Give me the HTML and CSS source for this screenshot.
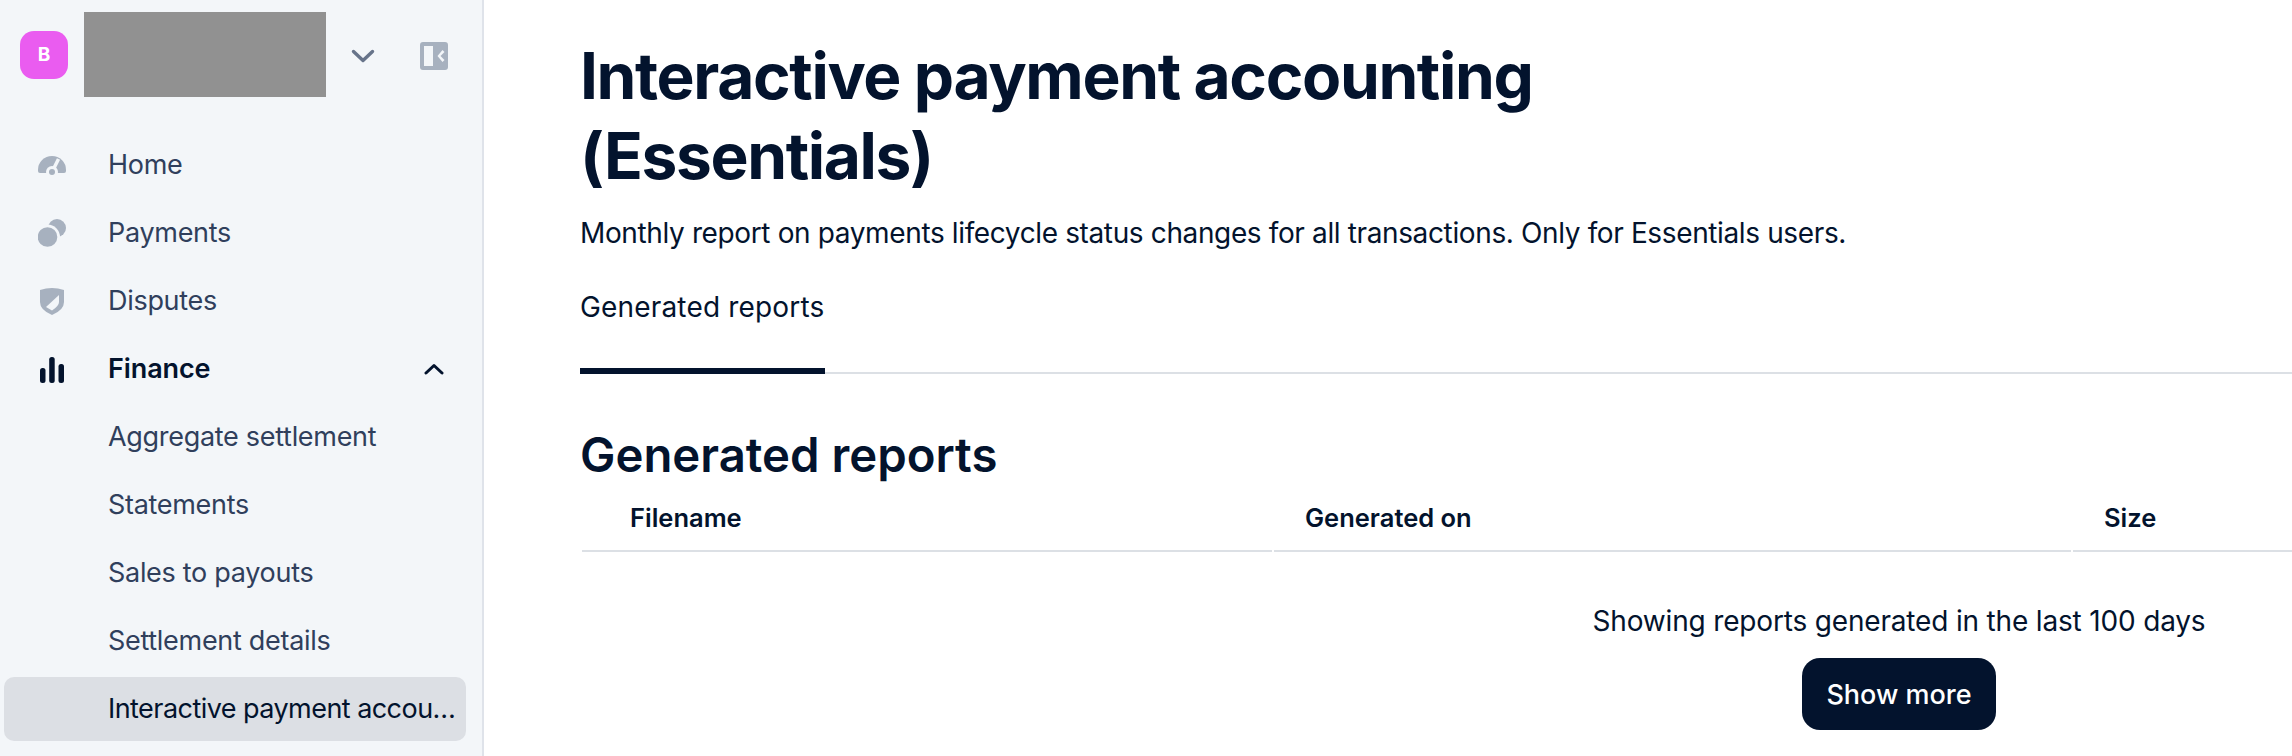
FILE: index.html
```html
<!DOCTYPE html>
<html lang="en">
<head>
  <meta charset="UTF-8">
  <title>Interactive payment accounting (Essentials)</title>
  <link rel="stylesheet" href="styles.css">
</head>
<body>

  <aside class="sidebar">
    <div class="org">
      <div class="org-badge">B</div>
      <div class="org-name"></div>
      <svg class="org-chevron" viewBox="0 0 24 14" width="24" height="14"><path d="M2.5 2.5 12 11.500 21.500 2.500" fill="none" stroke="#67748a" stroke-width="3.400" stroke-linecap="round" stroke-linejoin="round"/></svg>
      <svg class="org-collapse" viewBox="0 0 28 28" width="28" height="28"><path fill-rule="evenodd" d="M3 0h22a3 3 0 0 1 3 3v22a3 3 0 0 1-3 3H3a3 3 0 0 1-3-3V3a3 3 0 0 1 3-3ZM4 4v20h9V4H4ZM22.500 8 17.500 14 22.500 20 24.500 18 20.500 14 24.500 10Z" fill="#a7b1bf"/></svg>
    </div>

    <nav class="nav">
      <a class="nav-item">
        <svg class="nav-icon" viewBox="0 0 28 28" width="28" height="28">
          <path d="M0 19A14 14 0 0 1 28 19V20Q28 22 26 22H2Q0 22 0 20Z" fill="#a7b1bf"/>
          <circle cx="14" cy="21" r="6" fill="#f3f6f9"/>
          <path d="M15 19 20.500 8" stroke="#f3f6f9" stroke-width="3.500"/>
          <circle cx="14" cy="21" r="3" fill="#a7b1bf"/>
        </svg>
        Home
      </a>
      <a class="nav-item">
        <svg class="nav-icon" viewBox="0 0 28 28" width="28" height="28">
          <circle cx="19" cy="9" r="9" fill="#a7b1bf"/>
          <circle cx="9.500" cy="18" r="12.500" fill="#f3f6f9"/>
          <circle cx="9.500" cy="18" r="9.800" fill="#a7b1bf"/>
        </svg>
        Payments
      </a>
      <a class="nav-item">
        <svg class="nav-icon" viewBox="0 0 28 28" width="28" height="28">
          <path d="M2 3Q14-1 26 3V15Q26 23 14 28 2 23 2 15Z" fill="#a7b1bf"/>
          <path d="M21 8V15Q21 19 14 23.500L8 20Z" fill="#f3f6f9"/>
        </svg>
        Disputes
      </a>
      <a class="nav-item nav-open">
        <svg class="nav-icon" viewBox="0 0 28 28" width="28" height="28">
          <rect x="2" y="13" width="5.500" height="15" rx="2.500" fill="#03132d"/>
          <rect x="11.200" y="2" width="5.500" height="26" rx="2.500" fill="#03132d"/>
          <rect x="20.500" y="9" width="5.500" height="19" rx="2.500" fill="#03132d"/>
        </svg>
        Finance
        <svg class="nav-caret" viewBox="0 0 20 12" width="20" height="12"><path d="M2 10 10 2.500 18 10" fill="none" stroke="#03132d" stroke-width="3" stroke-linecap="round" stroke-linejoin="round"/></svg>
      </a>
      <a class="nav-item nav-sub">Aggregate settlement</a>
      <a class="nav-item nav-sub">Statements</a>
      <a class="nav-item nav-sub">Sales to payouts</a>
      <a class="nav-item nav-sub">Settlement details</a>
      <a class="nav-item nav-sub nav-active"><span class="nav-label">Interactive payment accounting (Essentials)</span></a>
    </nav>
  </aside>

  <main class="main">
    <h1 class="title">Interactive payment accounting (Essentials)</h1>
    <p class="desc">Monthly report on payments lifecycle status changes for all transactions. Only for Essentials users.</p>

    <div class="tabs">
      <div class="tab">Generated reports</div>
    </div>

    <h2 class="section-title">Generated reports</h2>

    <div class="table">
      <div class="table-head">Filename</div>
      <div class="table-head">Generated on</div>
      <div class="table-head">Size</div>
    </div>

    <div class="table-footer">
      <p class="footer-note">Showing reports generated in the last 100 days</p>
      <button class="more-btn">Show more</button>
    </div>
  </main>

</body>
</html>
```

FILE: styles.css
```css
:root {
  --ink: #03132d;
  --muted: #303f5c;
  --line: #dce0e5;
  --side-bg: #f3f6f9;
}

html, body {
  height: 100%;
}

body {
  margin: 0;
  display: flex;
  overflow: hidden;
  background: #fff;
  color: var(--ink);
  font-family: Inter, "Liberation Sans", sans-serif;
}

.sidebar {
  flex: 0 0 484px;
  min-width: 0;
  box-sizing: border-box;
  background: var(--side-bg);
  border-right: 2px solid #dfe3ea;
  padding: 12px 16px 0 4px;
}

.org {
  display: flex;
  align-items: center;
  height: 85px;
  margin-bottom: 36px;
  padding-left: 16px;
}

.org-badge {
  flex: none;
  width: 48px;
  height: 48px;
  border-radius: 14px;
  background: #ea5cf0;
  color: #fff;
  font-size: 19px;
  font-weight: 700;
  line-height: 48px;
  text-align: center;
}

.org-name {
  flex: none;
  width: 242px;
  height: 85px;
  margin-left: 16px;
  background: #919191;
}

.org-chevron {
  flex: none;
  margin: 2px 0 0 25px;
}

.org-collapse {
  flex: none;
  margin: 2px 0 0 45px;
}

.nav {
  display: flex;
  flex-direction: column;
  gap: 4px;
}

.nav-item {
  display: flex;
  align-items: center;
  box-sizing: border-box;
  height: 64px;
  padding: 0 12px 2px 34px;
  border-radius: 10px;
  color: var(--muted);
  font-size: 27px;
  letter-spacing: -0.3px;
}

.nav-icon {
  flex: none;
  margin: 2px 42px 0 0;
}

.nav-open {
  color: var(--ink);
  font-weight: 600;
  letter-spacing: -0.1px;
}

.nav-caret {
  margin: 2px 10px 0 auto;
}

.nav-sub {
  padding-left: 104px;
}

.nav-active {
  padding-right: 6px;
  background: #dcdfe4;
  color: var(--ink);
  letter-spacing: -0.55px;
}

.nav-label {
  min-width: 0;
  overflow: hidden;
  white-space: nowrap;
  text-overflow: ellipsis;
}

.main {
  flex: 1;
  min-width: 0;
  padding: 36px 0 0 96px;
}

.title {
  max-width: 1000px;
  margin: 0;
  font-size: 64px;
  font-weight: 700;
  line-height: 80px;
  letter-spacing: -1.35px;
}

.desc {
  margin: 17px 0 0;
  font-size: 28px;
  line-height: 40px;
  letter-spacing: -0.37px;
}

.tabs {
  margin-top: 34px;
  border-bottom: 2px solid var(--line);
}

.tab {
  box-sizing: border-box;
  width: 245px;
  height: 87px;
  margin-bottom: -2px;
  border-bottom: 6px solid var(--ink);
  font-size: 28px;
  line-height: 40px;
  letter-spacing: 0.17px;
}

.section-title {
  margin: 56px 0 0;
  font-size: 47.3px;
  font-weight: 600;
  line-height: 50px;
}

.table {
  display: grid;
  grid-template-columns: 690px 797px 1fr;
  gap: 2px;
  margin: 10px 0 0 2px;
}

.table-head {
  height: 62px;
  box-sizing: border-box;
  padding: 8px 0 0 48px;
  border-bottom: 2px solid var(--line);
  font-size: 25.5px;
  font-weight: 600;
  line-height: 40px;
}

.table-head + .table-head {
  padding-left: 31px;
}

.table-footer {
  display: flex;
  flex-direction: column;
  align-items: center;
  padding: 49px 0 0 926px;
}

.footer-note {
  margin: 0 0 17px;
  font-size: 28px;
  line-height: 40px;
  letter-spacing: -0.17px;
  white-space: nowrap;
}

.more-btn {
  flex: none;
  width: 194px;
  height: 72px;
  padding: 0;
  border: none;
  border-radius: 18px;
  background: var(--ink);
  color: #fff;
  font-family: inherit;
  font-size: 27px;
  font-weight: 500;
}
```
